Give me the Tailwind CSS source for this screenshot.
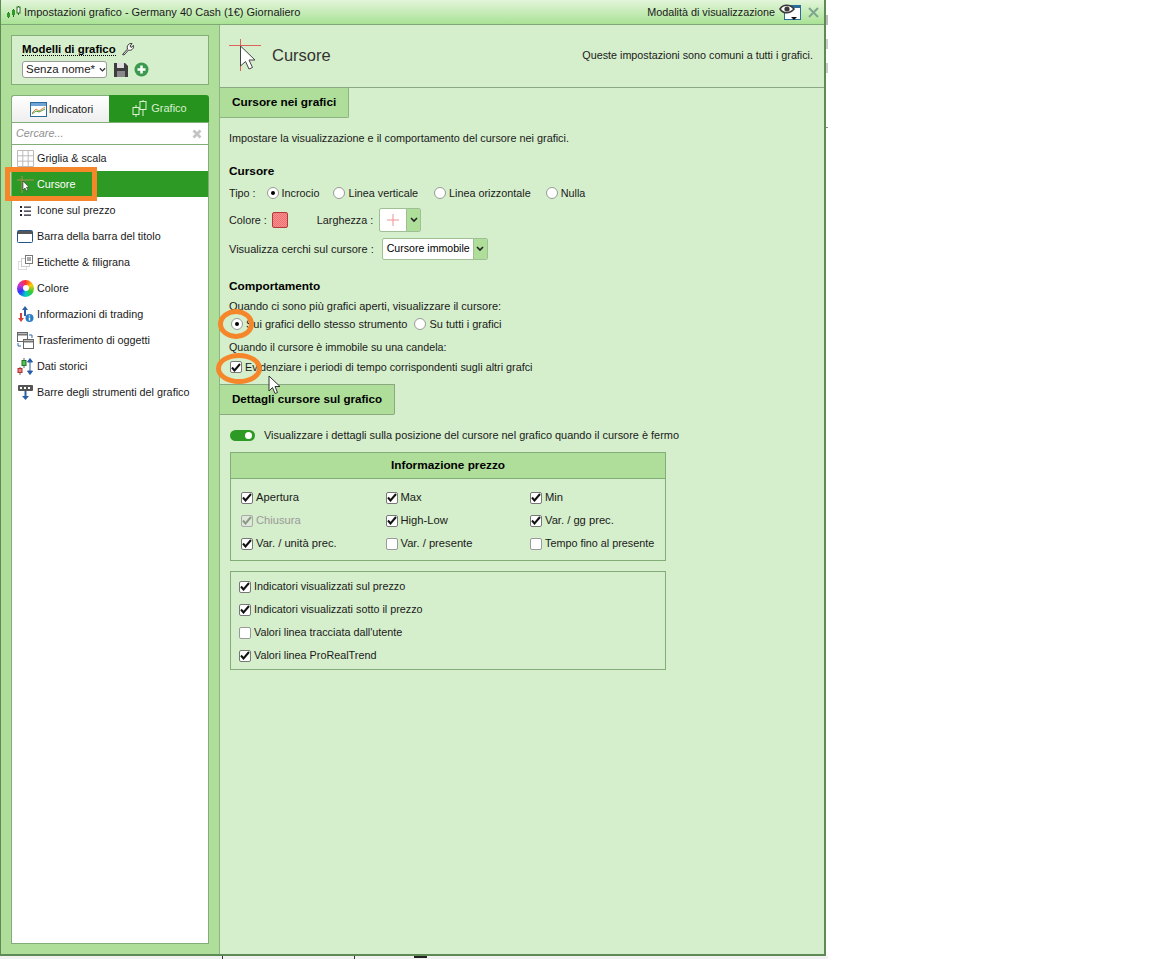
<!DOCTYPE html>
<html lang="it">
<head>
<meta charset="UTF-8">
<title>Impostazioni grafico</title>
<script src="https://cdn.jsdelivr.net/npm/@tailwindcss/browser@4"></script>
</head>
<body class="bg-white font-['Liberation_Sans',Arial,sans-serif] text-[10.8px] text-[#1a1a1a]">
<div class="relative h-[959px] w-[1152px] overflow-hidden">
  <!-- dialog -->
  <div class="flex h-[956px] w-[826px] flex-col border-r-2 border-b-2 border-l border-[#5d8a55]">
    <!-- title bar -->
    <div class="flex h-[25px] shrink-0 items-center border-b border-[#7fa877] bg-gradient-to-b from-[#e3f5da] to-[#a9e295] pl-[5px] pr-[5px]">
      <svg width="15" height="14" viewBox="0 0 15 14" class="mr-[3px]"><path d="M2.500 7v6M7.500 4v8M12.500 1v9" stroke="#2a6a20"/><rect x="1" y="8" width="3" height="4" fill="#2f9a2a"/><rect x="6" y="5" width="3" height="5" fill="#2f9a2a"/><rect x="11" y="2" width="3" height="6" fill="#fff" stroke="#2a6a20"/></svg>
      <span class="text-[11px]">Impostazioni grafico - Germany 40 Cash (1€) Giornaliero</span>
      <span class="ml-auto mr-[4px]">Modalità di visualizzazione</span>
      <svg width="24" height="18" viewBox="0 0 24 18" class="mr-[5px]"><rect x="5.500" y="2.500" width="16" height="14" fill="#fff" stroke="#2b6d9a"/><rect x="5" y="2" width="17" height="3" fill="#2b6d9a"/><path d="M1 6c3-5 10-5 14 0-4 5-11 5-14 0z" fill="#fff" stroke="#3a3a3a" stroke-width="1.600"/><circle cx="8" cy="6" r="2.600" fill="#3a3a3a"/><path d="M12 14h6l-3 3z" fill="#111"/></svg>
      <svg width="11" height="11" viewBox="0 0 11 11"><path d="M1 1l9 9M10 1l-9 9" stroke="#7fa58f" stroke-width="2"/></svg>
    </div>
    <div class="flex min-h-0 flex-1">
      <!-- left column -->
      <aside class="flex w-[219px] shrink-0 flex-col border-r border-[#8cb582] bg-[#aede9a] pb-[10px] pl-[10px] pr-[10px] pt-[10px]">
        <div class="h-[50px] w-[198px] border border-[#82ad78] bg-[#d5eecb] pl-[10px] pt-[6px]">
          <div class="flex h-[14px] items-center">
            <span class="border-b border-dotted border-black text-[11.400px] font-bold leading-[12px] text-black">Modelli di grafico</span>
            <svg width="14" height="14" viewBox="0 0 14 14" class="ml-[5px]"><path d="M1.500 12.500l5-5.500C5.500 4 7.500 1 11 1.500L9 4l1 1.500 2.500-2c.5 3.500-2.500 5.500-5 4.500l-4.500 5z" fill="#fff" stroke="#333"/></svg>
          </div>
          <div class="mt-[5px] flex items-center">
            <div class="flex h-[17px] w-[85px] items-center whitespace-nowrap rounded-[3px] border border-[#9a9a9a] bg-white pl-[3px] text-[11.500px]">Senza nome*<svg width="8" height="6" viewBox="0 0 8 6" class="ml-[4px]"><path d="M1 1l3 3 3-3" fill="none" stroke="#333" stroke-width="1.500"/></svg></div>
            <svg width="14" height="14" viewBox="0 0 14 14" class="ml-[7px]"><path d="M0 0h11l3 3v11H0z" fill="#3d3d3d"/><rect x="3" y="0" width="7" height="5" fill="#ddd"/><rect x="3" y="8" width="8" height="6" fill="#888"/></svg>
            <svg width="15" height="15" viewBox="0 0 15 15" class="ml-[6px]"><circle cx="7.500" cy="7.500" r="7" fill="#3c9a4e"/><path d="M7.500 3.500v8M3.500 7.500h8" stroke="#fff" stroke-width="2.500"/></svg>
          </div>
        </div>
        <div class="mt-[10px] flex h-[27px] w-[198px]">
          <div class="flex w-[98px] items-center justify-center rounded-tl-[3px] border-t border-l border-[#82ad78] bg-gradient-to-b from-white to-[#eeeeee] pl-[2px] text-[11px]">
            <svg width="17" height="15" viewBox="0 0 17 15" class="mr-[2px]"><rect x=".5" y=".5" width="16" height="14" fill="#fff" stroke="#2b6d9a"/><rect x="1" y="1" width="15" height="3" fill="#6fa2d6"/><path d="M2 11l4-4 3 2 6-4" fill="none" stroke="#e28a3a"/><path d="M2 12l4-3 3 1 6-3" fill="none" stroke="#4a9a40"/></svg>
            Indicatori
          </div>
          <div class="flex w-[100px] items-center justify-center rounded-tr-[3px] bg-[#27931f] text-[11px] text-[#d8f0d0]">
            <svg width="17" height="17" viewBox="0 0 17 17" class="mr-[3px]" fill="none" stroke="#dff2d8"><rect x="9" y="1.500" width="6" height="8"/><rect x="2" y="7.500" width="6" height="7"/><path d="M12 1v-1M12 10v6M5 5v2M5 15v2M8 9h1"/></svg>
            Grafico
          </div>
        </div>
        <div class="relative flex w-[198px] flex-1 flex-col border border-[#82ad78] bg-white">
          <div class="flex h-[22px] shrink-0 items-center justify-between border-b border-[#82ad78] pl-[4px] pr-[6px] italic text-[#8f8f8f]">
            <span>Cercare...</span>
            <svg width="10" height="10" viewBox="0 0 10 10"><path d="M1.500 1.500l7 7M8.500 1.500l-7 7" stroke="#c4c4c4" stroke-width="2.800"/></svg>
          </div>
          <div class="flex h-[26px] items-center pl-[5px]"><svg width="17" height="17" viewBox="0 0 17 17" class="mr-[3px]" fill="#fff" stroke="#bbb"><path d="M.5.500h16v16H.5zM5.800.500v16M11.200.500v16M.5 5.800h16M.5 11.200h16"/></svg>Griglia &amp; scala</div>
          <div class="flex h-[26px] items-center bg-[#2e9a26] pl-[5px] text-white"><svg width="17" height="17" viewBox="0 0 17 17" class="mr-[3px]"><path d="M0 4h17M5 0v17" stroke="#b08a50"/><path d="M6 5v9l2-2 1.500 3 1.500-.7-1.500-3H12z" fill="#fff" stroke="#333" stroke-width=".6"/></svg>Cursore</div>
          <div class="flex h-[26px] items-center pl-[5px]"><svg width="17" height="17" viewBox="0 0 17 17" class="mr-[3px]"><path d="M3 4h2v2H3zM3 8h2v2H3zM3 12h2v2H3zM7 4.500h7v1.200H7zM7 8.500h7v1.200H7zM7 12.500h7v1.200H7z" fill="#223"/></svg>Icone sul prezzo</div>
          <div class="flex h-[26px] items-center pl-[5px]"><svg width="17" height="17" viewBox="0 0 17 17" class="mr-[3px]"><rect x=".5" y="2.500" width="15" height="12" rx="1" fill="#fff" stroke="#22558c"/><rect x="1" y="3" width="14" height="3" fill="#555"/></svg>Barra della barra del titolo</div>
          <div class="flex h-[26px] items-center pl-[5px]"><svg width="17" height="17" viewBox="0 0 17 17" class="mr-[3px]" fill="#fff"><rect x="1.500" y="7.500" width="8" height="8" stroke="#ddd"/><rect x="4.500" y="4.500" width="8" height="8" stroke="#ccc"/><rect x="8.500" y="1.500" width="7" height="8" stroke="#777"/><path d="M10 4h4M10 6h4" stroke="#555"/></svg>Etichette &amp; filigrana</div>
          <div class="flex h-[26px] items-center pl-[5px]"><div class="mr-[3px] flex h-[17px] w-[17px] items-center justify-center rounded-full bg-[conic-gradient(#f33,#fc0,#3c3,#0cc,#33f,#c3c,#f33)]"><div class="h-[6px] w-[6px] rounded-full bg-white"></div></div>Colore</div>
          <div class="flex h-[26px] items-center pl-[5px]"><svg width="17" height="17" viewBox="0 0 17 17" class="mr-[3px]"><path d="M8 0l3 4H9v6H7V4H5z" fill="#2b5ea8"/><path d="M4 16L1 12h2V7h2v5h2z" fill="#d8413c"/><circle cx="12.500" cy="12" r="4" fill="#2b7ec4"/><path d="M12.500 9.500v1M12.500 11.500v3" stroke="#fff" stroke-width="1.400"/></svg>Informazioni di trading</div>
          <div class="flex h-[26px] items-center pl-[5px]"><svg width="17" height="17" viewBox="0 0 17 17" class="mr-[3px]" fill="#fff" stroke="#666"><rect x=".5" y=".5" width="10" height="9"/><path d="M1 2.500h9" stroke="#777" stroke-width="2"/><rect x="6.500" y="7.500" width="10" height="9"/><path d="M7 9.500h9" stroke="#777" stroke-width="2"/><path d="M12 3h3v3M4 14H1v-3" stroke="#2b6db0"/></svg>Trasferimento di oggetti</div>
          <div class="flex h-[26px] items-center pl-[5px]"><svg width="17" height="17" viewBox="0 0 17 17" class="mr-[3px]"><path d="M3 9v8M7 0v10" stroke="#666"/><rect x="1" y="10.500" width="4" height="4" fill="#f08080" stroke="#a33"/><rect x="5" y="2.500" width="4" height="5" fill="#58c058" stroke="#272"/><path d="M13 1v15M10.500 4L13 .5 15.500 4zM10.500 13l2.500 3.500 2.500-3.500z" fill="#2b5ea8" stroke="#2b5ea8"/></svg>Dati storici</div>
          <div class="flex h-[26px] items-center pl-[5px]"><svg width="17" height="17" viewBox="0 0 17 17" class="mr-[3px]"><rect x="1" y="1" width="15" height="6" rx="1" fill="#555"/><path d="M3 3h2v2H3zM7 3h2v2H7zM11 3h2v2h-2z" fill="#fff"/><path d="M7.500 7h2v5H12l-3.500 4L5 12h2.500z" fill="#2b5ea8"/></svg>Barre degli strumenti del grafico</div>
        </div>
      </aside>
      <!-- right column -->
      <main class="flex min-w-0 flex-1 flex-col bg-[#d5eecb]">
        <header class="flex h-[63px] shrink-0 items-center border-b border-[#8aa983] pb-[2px] pl-[9px] pr-[11px]">
          <svg width="34" height="34" viewBox="0 0 34 34" class="mt-[2px]"><path d="M0 6.500h32M11.500 0v32" stroke="#e0605a"/><path d="M11.500 7v20l5-4.500 3.500 7.500 3.500-1.500-3.500-7.500H26z" fill="#fff" stroke="#444"/></svg>
          <span class="ml-[9px] text-[16.500px] text-[#333]">Cursore</span>
          <span class="ml-auto text-[10.75px]">Queste impostazioni sono comuni a tutti i grafici.</span>
        </header>
        <div class="h-[30px] w-[129px] shrink-0 rounded-br-[2px] border-r border-b border-[#8cb582] bg-[#aede9a] pl-[12px] text-[11.800px] font-bold leading-[29px] text-black">Cursore nei grafici</div>
        <div class="pl-[9px]">
          <p class="mt-[10px] flex h-[20px] items-center text-[10.85px]">Impostare la visualizzazione e il comportamento del cursore nei grafici.</p>
          <h3 class="mt-[17px] flex h-[14px] items-center text-[11.800px] font-bold text-black">Cursore</h3>
          <div class="mt-[6px] flex h-[16px] items-center">
            <span>Tipo :</span>
            <span class="ml-[11px] flex items-center"><span class="mr-[3px] flex h-[12px] w-[12px] items-center justify-center rounded-full border border-[#9a9a9a] bg-white"><span class="h-[4px] w-[4px] rounded-full bg-black"></span></span>Incrocio</span>
            <span class="ml-[14px] flex items-center"><span class="mr-[3px] h-[12px] w-[12px] rounded-full border border-[#9a9a9a] bg-white"></span>Linea verticale</span>
            <span class="ml-[16px] flex items-center"><span class="mr-[3px] h-[12px] w-[12px] rounded-full border border-[#9a9a9a] bg-white"></span>Linea orizzontale</span>
            <span class="ml-[15px] flex items-center"><span class="mr-[3px] h-[12px] w-[12px] rounded-full border border-[#9a9a9a] bg-white"></span>Nulla</span>
          </div>
          <div class="mt-[7px] flex h-[24px] items-center">
            <span>Colore :</span>
            <span class="ml-[5px] h-[16px] w-[16px] rounded-[2px] border border-[#b23a3a] bg-[repeating-conic-gradient(#f79090_0_25%,#ee6f6f_0_50%)] bg-[length:2px_2px]"></span>
            <span class="ml-[29px]">Larghezza :</span>
            <div class="ml-[6px] flex h-[24px] w-[42px] overflow-hidden rounded-[2px] border border-[#9fbf95] bg-white">
              <div class="flex flex-1 items-center justify-center"><svg width="12" height="12" viewBox="0 0 12 12"><path d="M6 0v12M0 6h12" stroke="#f09090"/></svg></div>
              <div class="flex w-[14px] items-center justify-center border-l border-[#9fbf95] bg-[#aede9a]"><svg width="8" height="6" viewBox="0 0 8 6"><path d="M1 1l3 3 3-3" fill="none" stroke="#222" stroke-width="1.600"/></svg></div>
            </div>
          </div>
          <div class="mt-[6px] flex h-[22px] items-center">
            <span class="text-[11px]">Visualizza cerchi sul cursore :</span>
            <div class="ml-[8px] flex h-[22px] w-[106px] overflow-hidden rounded-[2px] border border-[#9fbf95] bg-white">
              <div class="flex flex-1 items-center whitespace-nowrap pl-[4px] text-[10.6px] text-black">Cursore immobile</div>
              <div class="flex w-[14px] items-center justify-center border-l border-[#9fbf95] bg-[#aede9a]"><svg width="8" height="6" viewBox="0 0 8 6"><path d="M1 1l3 3 3-3" fill="none" stroke="#222" stroke-width="1.600"/></svg></div>
            </div>
          </div>
          <h3 class="mt-[20px] flex h-[14px] items-center text-[11.800px] font-bold text-black">Comportamento</h3>
          <p class="mt-[5px] flex h-[14px] items-center text-[11px]">Quando ci sono più grafici aperti, visualizzare il cursore:</p>
          <div class="mt-[4px] flex h-[14px] items-center text-[11px]">
            <span class="ml-[2px] mr-[3px] flex h-[12px] w-[12px] items-center justify-center rounded-full border border-[#9a9a9a] bg-white"><span class="h-[4px] w-[4px] rounded-full bg-black"></span></span>Sui grafici dello stesso strumento
            <span class="ml-[7px] mr-[3px] h-[12px] w-[12px] rounded-full border border-[#9a9a9a] bg-white"></span>Su tutti i grafici
          </div>
          <p class="mt-[9px] flex h-[14px] items-center text-[10.7px]">Quando il cursore è immobile su una candela:</p>
          <div class="mt-[6px] flex h-[14px] items-center">
            <span class="ml-[1px] mr-[3px] flex h-[12px] w-[12px] items-center justify-center rounded-[2px] border border-[#777] bg-white"><svg width="10" height="9" viewBox="0 0 10 9"><path d="M1 4.500l2.500 3L9 1" fill="none" stroke="#111" stroke-width="2"/></svg></span>Evidenziare i periodi di tempo corrispondenti sugli altri grafci
          </div>
        </div>
        <div class="mt-[10px] h-[31px] w-[175px] shrink-0 rounded-br-[2px] border-t border-r border-b border-[#8aa983] bg-[#aede9a] pl-[12px] text-[11.600px] font-bold leading-[28px] text-black">Dettagli cursore sul grafico</div>
        <div class="relative pl-[10px]">
          <div class="mt-[13px] flex h-[14px] items-center text-[10.95px]">
            <span class="relative mr-[9px] h-[11px] w-[25px] rounded-full bg-[#2e9a26]"><span class="absolute top-[2px] right-[3px] h-[7px] w-[7px] rounded-full bg-white"></span></span>
            Visualizzare i dettagli sulla posizione del cursore nel grafico quando il cursore è fermo
          </div>
          <section class="mt-[10px] h-[109px] w-[436px] border border-[#82ad78]">
            <h4 class="flex h-[26px] items-center justify-center border-b border-[#82ad78] bg-[#aede9a] text-[11.800px] font-bold text-black">Informazione prezzo</h4>
            <div class="grid grid-cols-[144.500px_144.500px_1fr] pl-[10px] pt-[7px] text-[11.2px]">
              <div class="flex h-[23px] items-center"><span class="mr-[3px] flex h-[12px] w-[12px] items-center justify-center rounded-[2px] border border-[#777] bg-white"><svg width="10" height="9" viewBox="0 0 10 9"><path d="M1 4.500l2.500 3L9 1" fill="none" stroke="#111" stroke-width="2"/></svg></span>Apertura</div>
              <div class="flex h-[23px] items-center"><span class="mr-[3px] flex h-[12px] w-[12px] items-center justify-center rounded-[2px] border border-[#777] bg-white"><svg width="10" height="9" viewBox="0 0 10 9"><path d="M1 4.500l2.500 3L9 1" fill="none" stroke="#111" stroke-width="2"/></svg></span>Max</div>
              <div class="flex h-[23px] items-center"><span class="mr-[3px] flex h-[12px] w-[12px] items-center justify-center rounded-[2px] border border-[#777] bg-white"><svg width="10" height="9" viewBox="0 0 10 9"><path d="M1 4.500l2.500 3L9 1" fill="none" stroke="#111" stroke-width="2"/></svg></span>Min</div>
              <div class="flex h-[23px] items-center text-[#9a9a9a]"><span class="mr-[3px] flex h-[12px] w-[12px] items-center justify-center rounded-[2px] border border-[#a9a9a9] bg-[#dde8d8]"><svg width="10" height="9" viewBox="0 0 10 9"><path d="M1 4.500l2.500 3L9 1" fill="none" stroke="#8a9a85" stroke-width="2"/></svg></span>Chiusura</div>
              <div class="flex h-[23px] items-center"><span class="mr-[3px] flex h-[12px] w-[12px] items-center justify-center rounded-[2px] border border-[#777] bg-white"><svg width="10" height="9" viewBox="0 0 10 9"><path d="M1 4.500l2.500 3L9 1" fill="none" stroke="#111" stroke-width="2"/></svg></span>High-Low</div>
              <div class="flex h-[23px] items-center"><span class="mr-[3px] flex h-[12px] w-[12px] items-center justify-center rounded-[2px] border border-[#777] bg-white"><svg width="10" height="9" viewBox="0 0 10 9"><path d="M1 4.500l2.500 3L9 1" fill="none" stroke="#111" stroke-width="2"/></svg></span>Var. / gg prec.</div>
              <div class="flex h-[23px] items-center"><span class="mr-[3px] flex h-[12px] w-[12px] items-center justify-center rounded-[2px] border border-[#777] bg-white"><svg width="10" height="9" viewBox="0 0 10 9"><path d="M1 4.500l2.500 3L9 1" fill="none" stroke="#111" stroke-width="2"/></svg></span>Var. / unità prec.</div>
              <div class="flex h-[23px] items-center"><span class="mr-[3px] h-[12px] w-[12px] rounded-[2px] border border-[#999] bg-white"></span>Var. / presente</div>
              <div class="flex h-[23px] items-center text-[10.8px]"><span class="mr-[3px] h-[12px] w-[12px] rounded-[2px] border border-[#999] bg-white"></span>Tempo fino al presente</div>
            </div>
          </section>
          <section class="mt-[10px] h-[99px] w-[436px] border border-[#82ad78] pl-[8px] pt-[3px]">
            <div class="flex h-[23px] items-center"><span class="mr-[3px] flex h-[12px] w-[12px] items-center justify-center rounded-[2px] border border-[#777] bg-white"><svg width="10" height="9" viewBox="0 0 10 9"><path d="M1 4.500l2.500 3L9 1" fill="none" stroke="#111" stroke-width="2"/></svg></span>Indicatori visualizzati sul prezzo</div>
            <div class="flex h-[23px] items-center"><span class="mr-[3px] flex h-[12px] w-[12px] items-center justify-center rounded-[2px] border border-[#777] bg-white"><svg width="10" height="9" viewBox="0 0 10 9"><path d="M1 4.500l2.500 3L9 1" fill="none" stroke="#111" stroke-width="2"/></svg></span>Indicatori visualizzati sotto il prezzo</div>
            <div class="flex h-[23px] items-center"><span class="mr-[3px] h-[12px] w-[12px] rounded-[2px] border border-[#999] bg-white"></span>Valori linea tracciata dall'utente</div>
            <div class="flex h-[23px] items-center"><span class="mr-[3px] flex h-[12px] w-[12px] items-center justify-center rounded-[2px] border border-[#777] bg-white"><svg width="10" height="9" viewBox="0 0 10 9"><path d="M1 4.500l2.500 3L9 1" fill="none" stroke="#111" stroke-width="2"/></svg></span>Valori linea ProRealTrend</div>
          </section>
        </div>
      </main>
    </div>
  </div>
  <!-- what shows of the window behind the dialog -->
  <div class="h-[3px] w-[828px] bg-[#f2f2f2]"></div>
  <div class="absolute left-[222px] top-[956px] h-[3px] w-px bg-[#333]"></div>
  <div class="absolute left-[354px] top-[956px] h-[3px] w-px bg-[#333]"></div>
  <div class="absolute left-[414px] top-[956px] h-[2px] w-[13px] bg-[#222]"></div>
  <div class="absolute left-[826px] top-[127px] h-px w-[2px] bg-[#888]"></div>
  <div class="absolute left-[826px] top-[15px] h-[10px] w-[2px] bg-[#bbb]"></div>
  <div class="absolute left-[826px] top-[39px] h-[10px] w-[2px] bg-[#ccc]"></div>
  <div class="absolute left-[826px] top-[63px] h-[10px] w-[2px] bg-[#ccc]"></div>
  <!-- annotations drawn over the screenshot -->
  <div class="absolute left-[5px] top-[167px] h-[34px] w-[92px] border-[5px] border-[#f5862a]"></div>
  <div class="absolute left-[218px] top-[309px] h-[30px] w-[36px] rounded-[50%] border-[5px] border-[#f5862a]"></div>
  <div class="absolute left-[216px] top-[353px] h-[31px] w-[46px] rounded-[50%] border-[5px] border-[#f5862a]"></div>
  <svg width="14" height="20" viewBox="0 0 14 20" class="absolute left-[268px] top-[375px]"><path d="M1 1v15l3.500-3.500 2.500 6 2.500-1-2.500-6H12z" fill="#fff" stroke="#333"/></svg>
</div>
</body>
</html>
